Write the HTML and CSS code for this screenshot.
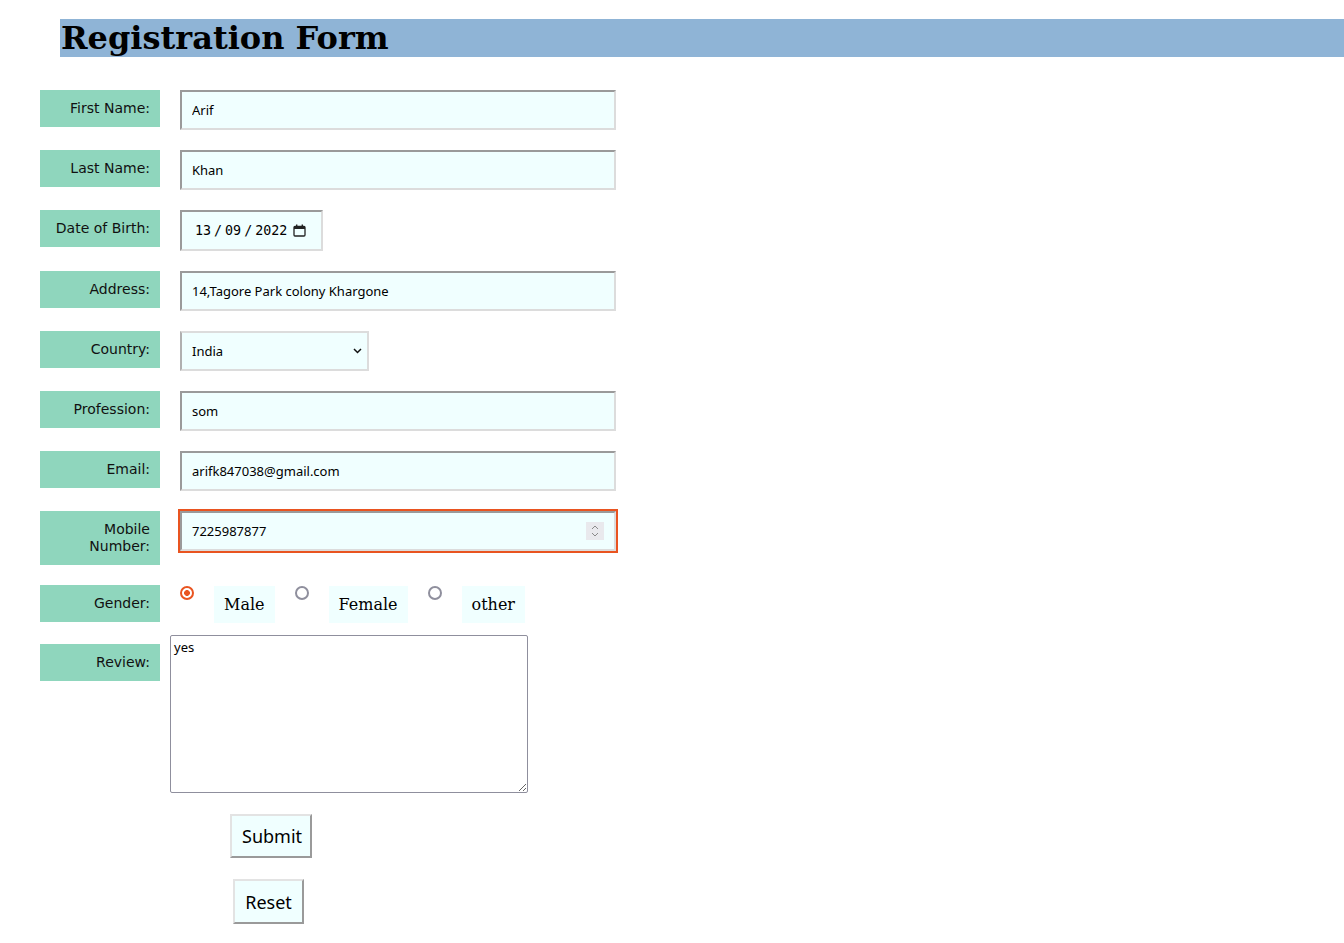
FILE: index.html
```html
<!DOCTYPE html>
<html lang="en">
<head>
<meta charset="utf-8">
<title>Registration Form</title>
<link rel="stylesheet" href="styles.css">
</head>
<body>
<h1 class="title">Registration Form</h1>
<form class="form">
  <div class="row">
    <label class="lbl" for="fn">First Name:</label>
    <input class="field" id="fn" type="text" value="Arif">
  </div>
  <div class="row">
    <label class="lbl" for="ln">Last Name:</label>
    <input class="field" id="ln" type="text" value="Khan">
  </div>
  <div class="row">
    <label class="lbl">Date of Birth:</label>
    <div class="date">
      <span>13</span><span class="sep">/</span><span>09</span><span class="sep">/</span><span>2022</span>
      <svg class="cal" width="13" height="13" viewBox="0 0 13 13"><rect x="1" y="2.5" width="11" height="9.5" rx="1" fill="none" stroke="#222" stroke-width="1.3"/><rect x="1" y="2.5" width="11" height="2.5" fill="#222"/><rect x="3" y="0.5" width="1.4" height="3" fill="#222"/><rect x="8.6" y="0.5" width="1.4" height="3" fill="#222"/></svg>
    </div>
  </div>
  <div class="row">
    <label class="lbl" for="ad">Address:</label>
    <input class="field" id="ad" type="text" value="14,Tagore Park colony Khargone">
  </div>
  <div class="row">
    <label class="lbl" for="co">Country:</label>
    <div class="selwrap">
      <select class="sel" id="co"><option>India</option></select>
      <svg class="chev" width="9" height="6" viewBox="0 0 9 6"><path d="M1 1 L4.5 4.5 L8 1" fill="none" stroke="#111" stroke-width="1.5"/></svg>
    </div>
  </div>
  <div class="row">
    <label class="lbl" for="pr">Profession:</label>
    <input class="field" id="pr" type="text" value="som">
  </div>
  <div class="row">
    <label class="lbl" for="em">Email:</label>
    <input class="field" id="em" type="text" value="arifk847038@gmail.com">
  </div>
  <div class="row">
    <label class="lbl" for="mo">Mobile Number:</label>
    <div class="numwrap">
      <input class="field focus" id="mo" type="text" value="7225987877">
      <svg class="spin" width="18" height="18" viewBox="0 0 18 18"><rect width="18" height="18" fill="#e9e9ed"/><path d="M6 7 L9 4 L12 7" fill="none" stroke="#8a8a8a" stroke-width="1"/><path d="M6 11 L9 14 L12 11" fill="none" stroke="#8a8a8a" stroke-width="1"/></svg>
    </div>
  </div>
  <div class="row">
    <label class="lbl">Gender:</label>
    <div class="radios">
      <input class="radio" type="radio" name="g" id="m" checked>
      <label class="opt" for="m">Male</label>
      <input class="radio" type="radio" name="g" id="f">
      <label class="opt" for="f">Female</label>
      <input class="radio" type="radio" name="g" id="o">
      <label class="opt" for="o">other</label>
    </div>
  </div>
  <div class="row review">
    <label class="lbl" for="rv">Review:</label>
    <textarea class="area" id="rv">yes</textarea>
  </div>
  <div class="btnrow"><button class="btn submit" type="submit">Submit</button></div>
  <div class="btnrow"><button class="btn reset" type="reset">Reset</button></div>
</form>
</body>
</html>
```
FILE: styles.css
```css
html, body {
  margin: 0;
  padding: 0;
  background: #fff;
}

.title {
  margin: 19px 0 0 60px;
  height: 38px;
  line-height: 39px;
  background: #8fb4d6;
  font-family: "DejaVu Serif", serif;
  font-weight: bold;
  font-size: 32px;
  color: #000;
  padding-left: 1px;
}

.form {
  display: flex;
  flex-direction: column;
  gap: 20px;
  padding: 33px 0 20px 40px;
}

.row {
  display: flex;
  align-items: flex-start;
  column-gap: 20px;
}

.lbl {
  box-sizing: border-box;
  width: 120px;
  flex: none;
  padding: 10px 10px;
  line-height: 17px;
  background: #8fd6bd;
  text-align: right;
  font-family: "DejaVu Sans", sans-serif;
  font-size: 14px;
  color: #111;
}

.field {
  box-sizing: border-box;
  width: 436px;
  height: 40px;
  margin: 0;
  padding: 0 10px;
  border-style: solid;
  border-width: 2px;
  border-color: #9a9a9a #dcdcdc #dcdcdc #9a9a9a;
  background: #f0ffff;
  font-family: "Noto Sans", sans-serif;
  font-size: 13px;
  color: #000;
  outline: none;
}

.date {
  box-sizing: border-box;
  width: 143px;
  height: 41px;
  display: flex;
  align-items: center;
  padding-left: 13px;
  border-style: solid;
  border-width: 2px;
  border-color: #9a9a9a #dcdcdc #dcdcdc #9a9a9a;
  background: #f0ffff;
  font-family: "DejaVu Sans Mono", monospace;
  font-size: 13.33px;
  color: #000;
}

.sep {
  margin: 0 3px;
}

.cal {
  margin-left: 6px;
  margin-top: -1px;
}

.selwrap {
  position: relative;
  width: 189px;
  height: 40px;
}

.sel {
  appearance: none;
  -webkit-appearance: none;
  box-sizing: border-box;
  width: 189px;
  height: 40px;
  margin: 0;
  padding: 0 10px;
  border-style: solid;
  border-width: 2px;
  border-color: #dcdcdc #dcdcdc #dcdcdc #b0b0b0;
  border-radius: 0;
  background: #f0ffff;
  font-family: "Noto Sans", sans-serif;
  font-size: 13px;
  color: #000;
}

.chev {
  position: absolute;
  left: 173px;
  top: 17px;
}

.numwrap {
  position: relative;
  width: 436px;
  height: 40px;
}

.focus {
  outline: 2px solid #e95420;
  outline-offset: 0;
}

.spin {
  position: absolute;
  left: 406px;
  top: 11px;
}

.radios {
  display: flex;
  align-items: flex-start;
  column-gap: 20px;
  margin-top: 1px;
}

.radio {
  appearance: none;
  -webkit-appearance: none;
  box-sizing: border-box;
  width: 14px;
  height: 14px;
  margin: 0;
  border: 2px solid #8f8f9d;
  border-radius: 50%;
  background: #fff;
}

.radio:checked {
  border-color: #e95420;
  background: radial-gradient(circle, #e95420 0 2.6px, #fff 3.2px);
}

.opt {
  display: inline-block;
  height: 37px;
  line-height: 37px;
  padding: 0 10px;
  background: #f0ffff;
  font-family: "DejaVu Serif", serif;
  font-size: 16px;
  color: #000;
}

.review {
  margin-top: -8px;
}

.review .lbl {
  margin-top: 9px;
}

.area {
  box-sizing: border-box;
  width: 358px;
  height: 158px;
  margin: 0 0 0 -10px;
  padding: 2px 3px;
  border: 1px solid #8f8f9d;
  border-radius: 2px;
  background: #fff;
  font-family: "Noto Sans", sans-serif;
  font-size: 13px;
  color: #000;
}

.btnrow {
  display: flex;
  margin-top: 1px;
}

.btn {
  box-sizing: border-box;
  height: 44px;
  margin: 0;
  padding: 0 10px;
  border-style: solid;
  border-width: 2px;
  border-color: #e3e3e3 #9a9a9a #9a9a9a #e3e3e3;
  background: #f0ffff;
  font-family: "Noto Sans", sans-serif;
  font-size: 18px;
  color: #000;
}

.submit {
  margin-left: 190px;
  width: 82px;
}

.reset {
  margin-left: 193px;
  width: 71px;
  height: 45px;
}
```
